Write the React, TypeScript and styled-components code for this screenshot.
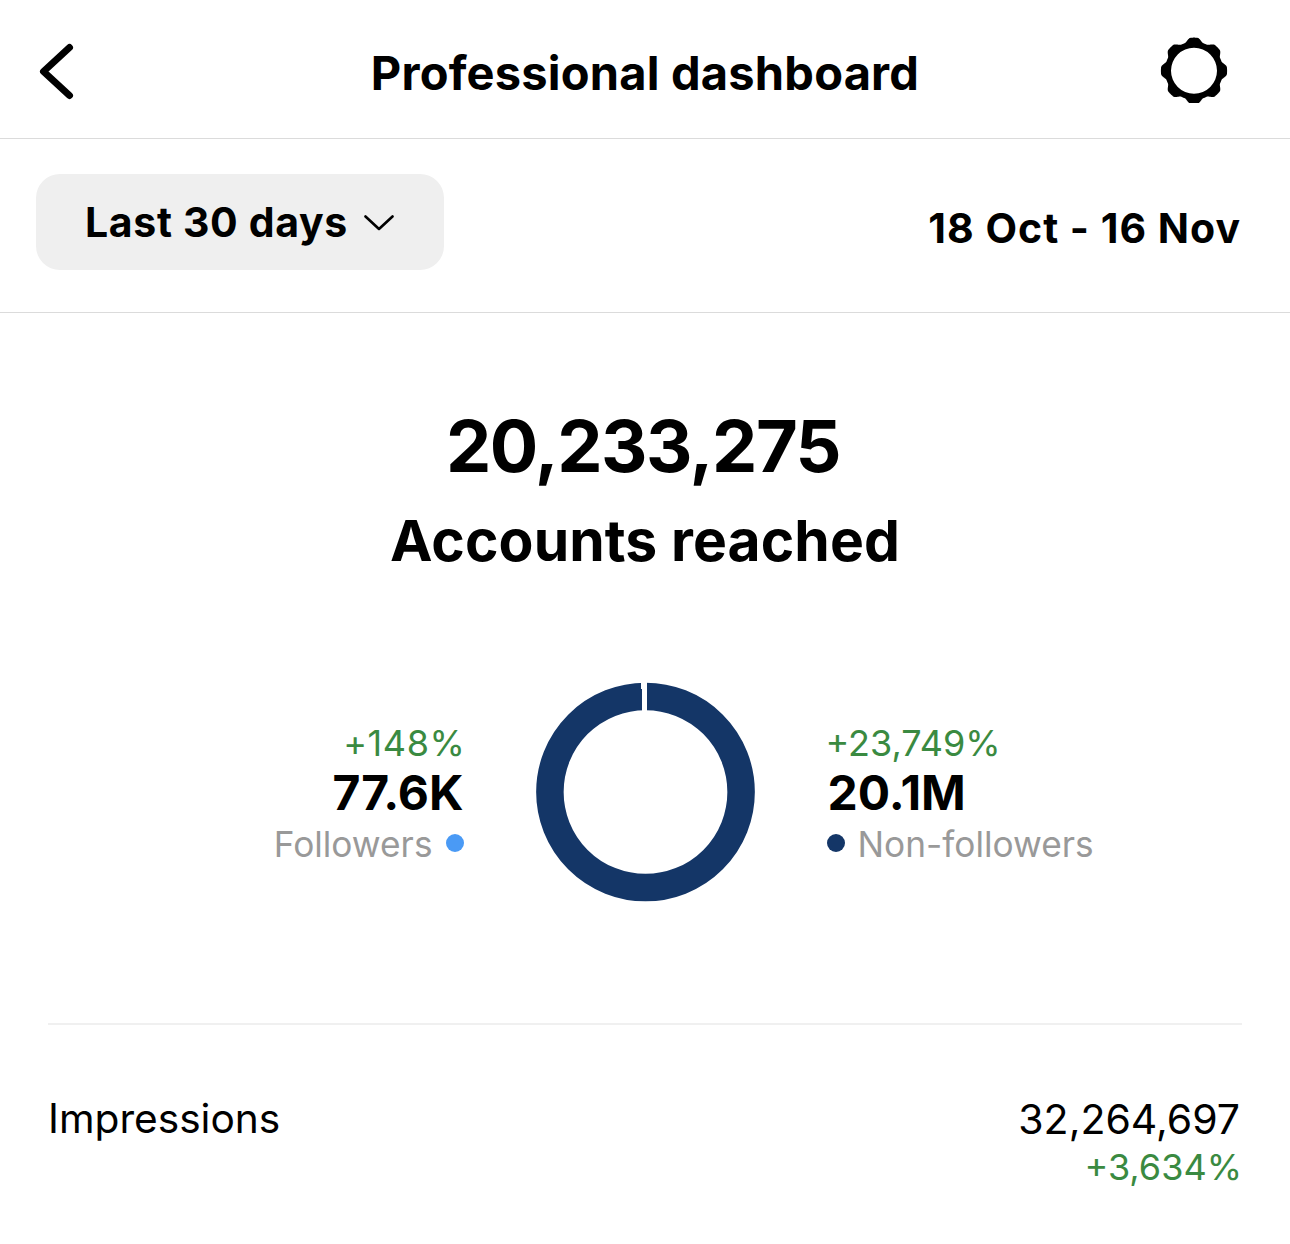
import React from 'react'
import styled, { createGlobalStyle } from 'styled-components'

const GlobalStyle = createGlobalStyle`
  html, body {
    margin: 0;
    padding: 0;
    background: #fff;
    color: #000;
    font-family: Inter, "Liberation Sans", sans-serif;
  }
`

const Page = styled.div`
  width: 1290px;
  height: 1244px;
  overflow: hidden;
  background: #fff;
`

const Header = styled.header`
  height: 138px;
  display: grid;
  grid-template-columns: 1fr auto 1fr;
  align-items: center;
  border-bottom: 1px solid #dbdbdb;
`

const IconSlot = styled.div<{ $side: 'left' | 'right' }>`
  width: 68px;
  height: 68px;
  display: flex;
  align-items: center;
  justify-content: center;
  justify-self: ${({ $side }) => ($side === 'left' ? 'start' : 'end')};
  margin: ${({ $side }) => ($side === 'left' ? '0 0 0 36px' : '0 62px 0 0')};
`

const Title = styled.h1`
  margin: 0;
  padding-top: 6px;
  font-size: 47px;
  font-weight: 700;
  letter-spacing: 0.2px;
`

const FilterRow = styled.div`
  height: 138px;
  display: flex;
  align-items: flex-start;
  justify-content: space-between;
  padding: 35px 49px 0 36px;
  border-bottom: 1px solid #dbdbdb;
`

const RangeButton = styled.div`
  width: 408px;
  height: 96px;
  border-radius: 24px;
  background: #efefef;
  display: flex;
  align-items: center;
  gap: 16px;
  padding-left: 49px;
  box-sizing: border-box;
  font-size: 41px;
  font-weight: 700;
  letter-spacing: 0.65px;
`

const DateRange = styled.div`
  font-size: 41px;
  font-weight: 700;
  letter-spacing: 1px;
  padding-top: 29px;
`

const Hero = styled.section`
  padding: 91px 4px 0 0;
  text-align: center;
`

const HeroNumber = styled.div`
  font-size: 72px;
  line-height: 84px;
  font-weight: 700;
  letter-spacing: -1.5px;
`

const HeroLabel = styled.div`
  font-size: 57px;
  line-height: 68px;
  font-weight: 700;
  margin: 19px -4px 0 0;
  letter-spacing: 0.1px;
`

const Reach = styled.div`
  display: grid;
  grid-template-columns: 1fr 220px 1fr;
  column-gap: 72px;
  align-items: center;
  height: 220px;
  margin-top: 107px;
  padding-left: 1px;
`

const ReachColumn = styled.div<{ $side: 'left' | 'right' }>`
  display: flex;
  flex-direction: column;
  align-items: ${({ $side }) => ($side === 'left' ? 'flex-end' : 'flex-start')};
  margin-left: ${({ $side }) => ($side === 'left' ? 0 : -1)}px;
  padding-top: 6px;
`

const Delta = styled.div`
  color: #3a8a41;
  font-size: 36px;
  line-height: 44px;
`

const LeftDelta = styled(Delta)`
  margin-right: -2px;
  letter-spacing: 0.6px;
`

const RightDelta = styled(Delta)`
  margin-left: -1px;
`

const MetricDelta = styled(Delta)`
  margin-right: -2px;
`

const ReachValue = styled.div<{ $nudge?: number }>`
  margin-left: ${({ $nudge }) => $nudge ?? 0}px;
  font-size: 48px;
  line-height: 56px;
  font-weight: 700;
`

const Legend = styled.div`
  display: flex;
  align-items: center;
  gap: 13px;
  color: #999;
  font-size: 35.25px;
  line-height: 48px;
`

const Dot = styled.span<{ $color: string }>`
  width: 18px;
  height: 18px;
  margin-top: -4px;
  border-radius: 50%;
  background: ${({ $color }) => $color};
`

const Divider = styled.div`
  height: 2px;
  margin: 121px 48px 0;
  background: #f0f0f0;
`

const MetricRow = styled.div`
  display: flex;
  justify-content: space-between;
  padding: 68px 50px 0 48px;
`

const MetricLabel = styled.div`
  font-size: 40.65px;
  line-height: 52px;
`

const MetricValues = styled.div`
  display: flex;
  flex-direction: column;
  align-items: flex-end;
`

const MetricValue = styled.div`
  font-size: 41px;
  line-height: 52px;
`

// flat round tops with a soft shoulder into the ring
const gearPath = (() => {
  const points: string[] = []
  const steps = 480
  for (let i = 0; i < steps; i++) {
    const angle = (i / steps) * Math.PI * 2
    const sector = Math.PI / 4
    const offset = Math.abs(((angle + sector / 2) % sector) - sector / 2) / (sector / 2)
    const t = Math.min(1, Math.max(0, (0.85 - offset) / 0.6))
    const radius = 29 + 4.1 * t * t * (3 - 2 * t)
    points.push(`${(radius * Math.sin(angle)).toFixed(2)} ${(-radius * Math.cos(angle)).toFixed(2)}`)
  }
  return `M${points.join('L')}Z M23 0A23 23 0 1 0 -23 0A23 23 0 1 0 23 0Z`
})()

const BackIcon = () => (
  <svg width="68" height="68" viewBox="0 0 68 68" fill="none">
    <path d="M33.5 12.5 L7.5 36.5 L33.5 60.5" stroke="#000" strokeWidth="7" strokeLinecap="round" strokeLinejoin="round" />
  </svg>
)

const GearIcon = () => (
  <svg width="68" height="68" viewBox="-34 -35.7 68 68">
    <path d={gearPath} fill="#000" fillRule="evenodd" />
  </svg>
)

const Chevron = () => (
  <svg width="30" height="18" viewBox="0 0 30 18" fill="none">
    <path d="M1.5 3.5 L15 16 L28.5 3.5" stroke="#000" strokeWidth="2.6" strokeLinecap="round" strokeLinejoin="round" />
  </svg>
)

const Donut = () => (
  <svg width="220" height="220" viewBox="0 0 220 220">
    <circle cx="109.5" cy="110" r="95.6" fill="none" stroke="#143667" strokeWidth="27.5" />
    <rect x="106" y="0" width="5" height="30" fill="#fff" />
    <rect x="105" y="0" width="1" height="7" fill="#fff" />
  </svg>
)

const App = () => {
  return (
    <Page>
      <GlobalStyle />
      <Header>
        <IconSlot $side="left">
          <BackIcon />
        </IconSlot>
        <Title>Professional dashboard</Title>
        <IconSlot $side="right">
          <GearIcon />
        </IconSlot>
      </Header>
      <FilterRow>
        <RangeButton>
          Last 30 days
          <Chevron />
        </RangeButton>
        <DateRange>18 Oct - 16 Nov</DateRange>
      </FilterRow>
      <Hero>
        <HeroNumber>20,233,275</HeroNumber>
        <HeroLabel>Accounts reached</HeroLabel>
      </Hero>
      <Reach>
        <ReachColumn $side="left">
          <LeftDelta>+148%</LeftDelta>
          <ReachValue>77.6K</ReachValue>
          <Legend>
            Followers
            <Dot $color="#4a9af5" />
          </Legend>
        </ReachColumn>
        <Donut />
        <ReachColumn $side="right">
          <RightDelta>+23,749%</RightDelta>
          <ReachValue $nudge={1}>20.1M</ReachValue>
          <Legend>
            <Dot $color="#143667" />
            Non-followers
          </Legend>
        </ReachColumn>
      </Reach>
      <Divider />
      <MetricRow>
        <MetricLabel>Impressions</MetricLabel>
        <MetricValues>
          <MetricValue>32,264,697</MetricValue>
          <MetricDelta>+3,634%</MetricDelta>
        </MetricValues>
      </MetricRow>
    </Page>
  )
}

export default App
